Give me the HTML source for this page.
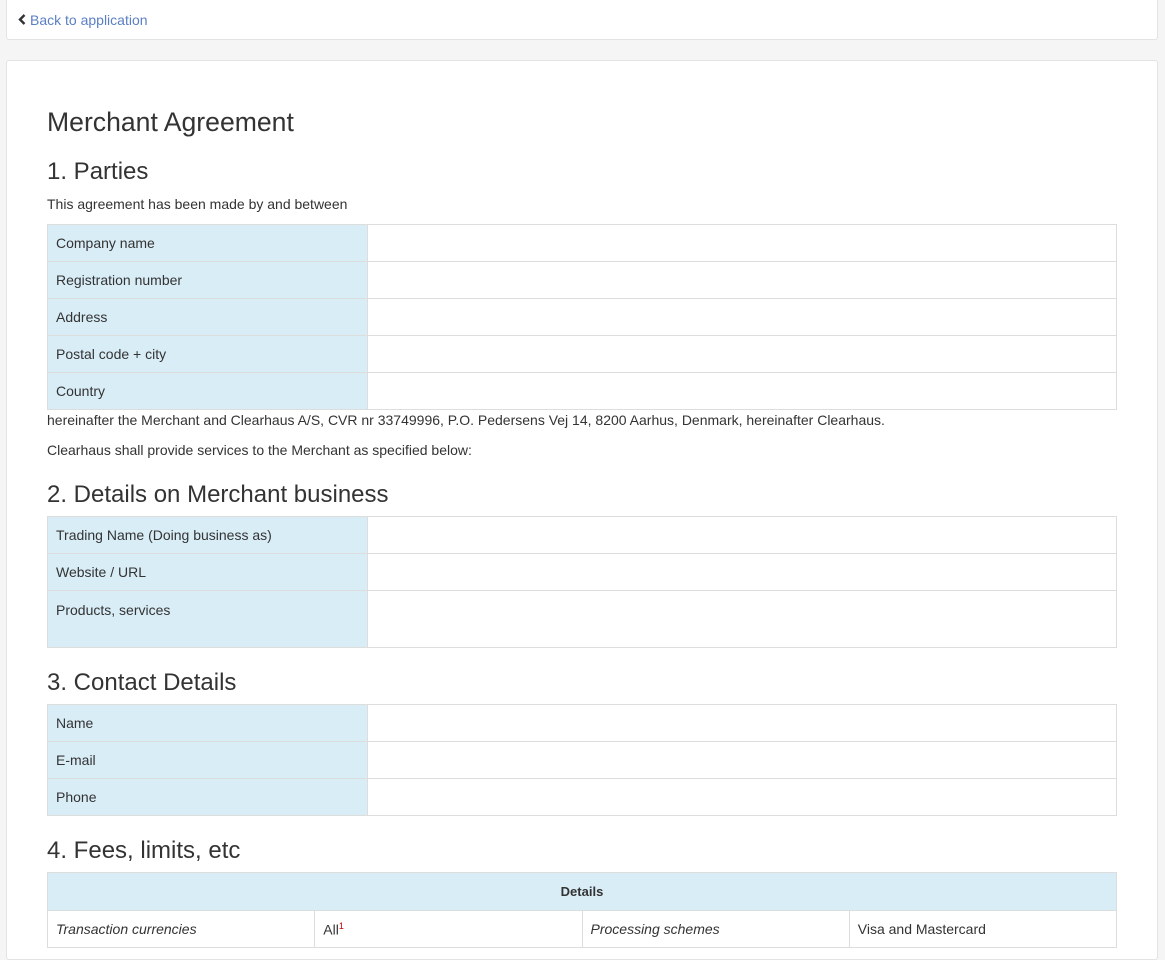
<!DOCTYPE html>
<html><head><meta charset="utf-8"><style>
*{box-sizing:border-box;margin:0;padding:0}
body{width:1165px;height:949px;overflow:hidden;background:#f5f5f5;font-family:"Liberation Sans",Arial,sans-serif;color:#333;font-size:14px;position:relative}
.top{position:absolute;left:6px;top:0;width:1152px;height:40px;background:#fff;border:1px solid #e3e3e3;border-top:none;border-radius:0 0 3px 3px}
.top a{position:absolute;left:23px;top:12px;color:#5a7fc4;text-decoration:none;font-size:14px}
.top svg{position:absolute;left:11px;top:14px}
.main{position:absolute;left:6px;top:60px;width:1152px;height:900px;background:#fff;border:1px solid #e3e3e3;border-radius:3px}
.a{position:absolute;left:47px;white-space:nowrap}
h1{font-weight:400;font-size:26.6px;color:#333}
h2{font-weight:400;font-size:24px;color:#333}
table{position:absolute;left:47px;width:1070px;border-collapse:collapse}
td{border:1px solid #ddd;height:37px;padding:0 8px;vertical-align:middle;font-size:14px}
td.l{background:#d9edf7;width:320px}
td.t{vertical-align:top;padding-top:11px}
th{background:#d9edf7;border:1px solid #ddd;height:38px;font-size:13px;font-weight:700}
i{font-style:italic}
sup{color:#c00;font-size:9px}
</style></head><body>
<div class="top"><svg width="8" height="11" viewBox="0 0 8 11"><path d="M6.5 1 L2 5.5 L6.5 10" fill="none" stroke="#333" stroke-width="2.4"/></svg><a href="#">Back to application</a></div>
<div class="main"></div>
<h1 class="a" style="top:107px">Merchant Agreement</h1>
<h2 class="a" style="top:158px">1. Parties</h2>
<div class="a" style="top:196px">This agreement has been made by and between</div>
<table style="top:224px">
<tr><td class="l">Company name</td><td></td></tr>
<tr><td class="l">Registration number</td><td></td></tr>
<tr><td class="l">Address</td><td></td></tr>
<tr><td class="l">Postal code + city</td><td></td></tr>
<tr><td class="l">Country</td><td></td></tr>
</table>
<div class="a" style="top:412px">hereinafter the Merchant and Clearhaus A/S, CVR nr 33749996, P.O. Pedersens Vej 14, 8200 Aarhus, Denmark, hereinafter Clearhaus.</div>
<div class="a" style="top:442px">Clearhaus shall provide services to the Merchant as specified below:</div>
<h2 class="a" style="top:481px">2. Details on Merchant business</h2>
<table style="top:516px">
<tr><td class="l">Trading Name (Doing business as)</td><td></td></tr>
<tr><td class="l">Website / URL</td><td></td></tr>
<tr><td class="l t" style="height:57px">Products, services</td><td></td></tr>
</table>
<h2 class="a" style="top:669px">3. Contact Details</h2>
<table style="top:704px">
<tr><td class="l">Name</td><td></td></tr>
<tr><td class="l">E-mail</td><td></td></tr>
<tr><td class="l">Phone</td><td></td></tr>
</table>
<h2 class="a" style="top:837px">4. Fees, limits, etc</h2>
<table style="top:872px;table-layout:fixed">
<tr><th colspan="4">Details</th></tr>
<tr><td><i>Transaction currencies</i></td><td>All<sup>1</sup></td><td><i>Processing schemes</i></td><td>Visa and Mastercard</td></tr>
</table>
</body></html>
